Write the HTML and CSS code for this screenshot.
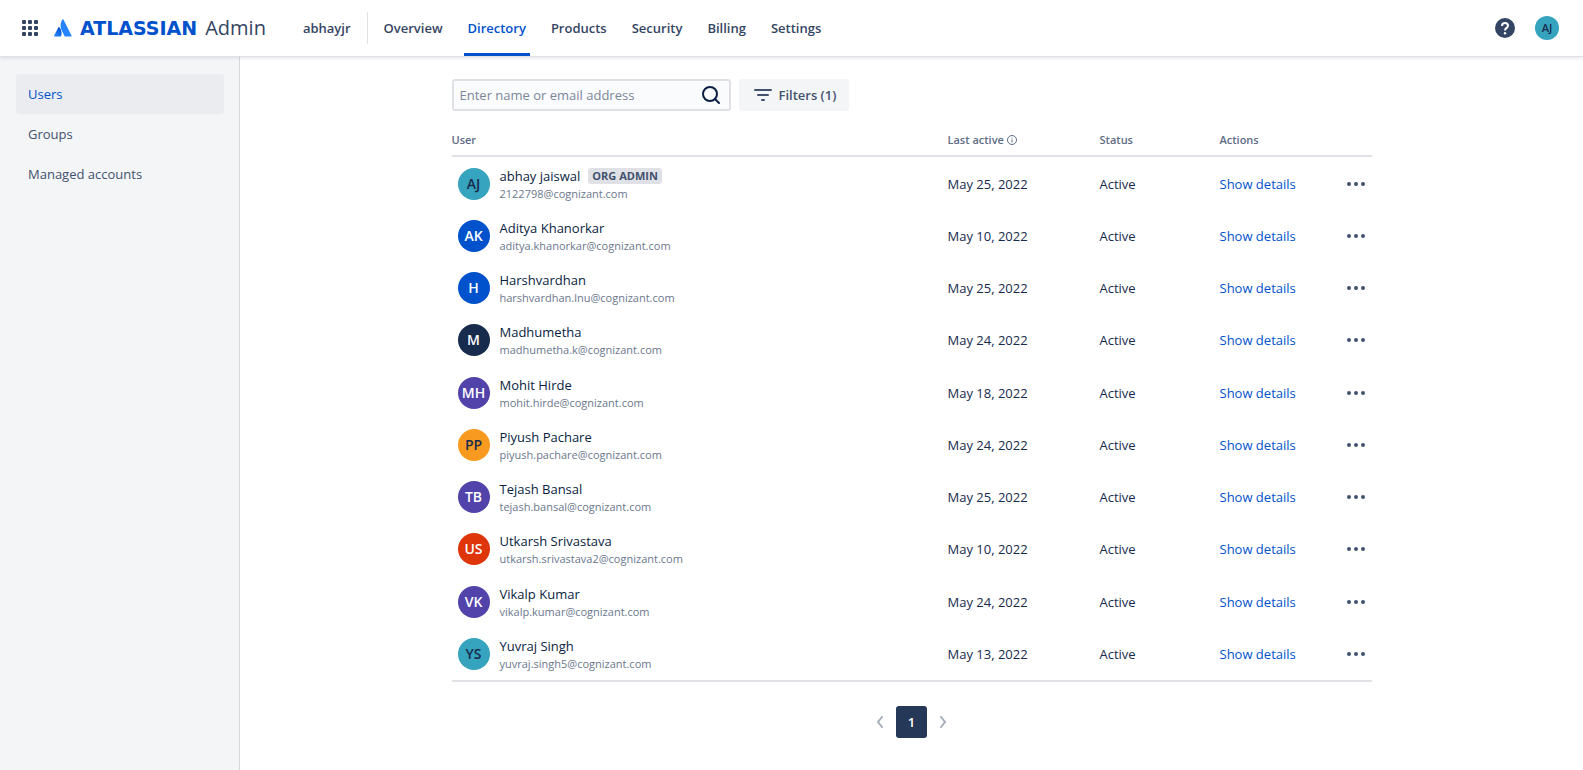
FILE: index.html
```html
<!DOCTYPE html>
<html lang="en">
<head>
<meta charset="utf-8">
<title>Users - Atlassian Admin</title>
<link rel="stylesheet" href="styles.css">
</head>
<body>
<header class="topbar">
  <button class="icon-button switcher" aria-label="Switch product">
    <svg width="16" height="16" viewBox="0 0 16 16" fill="currentColor"><rect width="4" height="4" rx="1"/><rect x="6" width="4" height="4" rx="1"/><rect x="12" width="4" height="4" rx="1"/><rect y="6" width="4" height="4" rx="1"/><rect x="6" y="6" width="4" height="4" rx="1"/><rect x="12" y="6" width="4" height="4" rx="1"/><rect y="12" width="4" height="4" rx="1"/><rect x="6" y="12" width="4" height="4" rx="1"/><rect x="12" y="12" width="4" height="4" rx="1"/></svg>
  </button>
  <a class="brand" href="#">
    <svg class="brand-mark" width="18" height="18" viewBox="0 0 18 18"><defs><linearGradient id="mark" x1="0.8" y1="0.1" x2="0.3" y2="1"><stop offset="0" stop-color="#0052cc"/><stop offset="1" stop-color="#2684ff"/></linearGradient></defs><path fill="url(#mark)" d="M5.3 8.2c-.3-.3-.7-.3-.9.1L.1 16.800c-.2.4 0 .8.5.8h5.900c.2 0 .4-.1.5-.3 1.300-2.700.5-6.700-1.700-9.100z"/><path fill="#2684ff" d="M8.400.5C6 4.200 6.200 8.300 7.800 11.500l2.800 5.700c.1.200.3.400.6.400h5.900c.5 0 .7-.5.500-.8L9.400.500c-.2-.5-.7-.5-1 0z"/></svg>
    <span class="brand-name">ATLASSIAN</span>
    <span class="brand-product">Admin</span>
  </a>
  <a class="org" href="#">abhayjr</a>
  <nav class="nav" aria-label="Primary">
    <a href="#">Overview</a>
    <a class="current" href="#" aria-current="page">Directory</a>
    <a href="#">Products</a>
    <a href="#">Security</a>
    <a href="#">Billing</a>
    <a href="#">Settings</a>
  </nav>
  <div class="tools">
    <button class="icon-button" aria-label="Help">
      <svg width="20" height="20" viewBox="0 0 20 20"><circle cx="10" cy="10" r="10" fill="#344563"/><path d="M7 7.900C7 6 8.300 5 10 5s3 1 3 2.700c0 2.200-3 2.200-3 4.700" fill="none" stroke="#fff" stroke-width="2"/><circle cx="10" cy="15.200" r="1.200" fill="#fff"/></svg>
    </button>
    <button class="avatar avatar-small teal" aria-label="Your profile">AJ</button>
  </div>
</header>
<div class="shell">
  <nav class="sidebar" aria-label="Directory">
    <a class="selected" href="#">Users</a>
    <a href="#">Groups</a>
    <a href="#">Managed accounts</a>
  </nav>
  <main class="main">
    <div class="content">
      <div class="controls">
        <label class="search">
          <input type="text" placeholder="Enter name or email address" aria-label="Search users">
          <svg width="20" height="20" viewBox="0 0 20 20" fill="none" stroke="#091e42" stroke-width="2"><circle cx="9" cy="9" r="7"/><path d="M14 14l4 4" stroke-linecap="round"/></svg>
        </label>
        <button class="filters">
          <svg width="18" height="12" viewBox="0 0 18 12" fill="none" stroke="currentColor" stroke-width="2" stroke-linecap="round"><path d="M1 1h16M4 6h10M8 11h2"/></svg>
          Filters (1)
        </button>
      </div>
      <table class="users">
        <thead>
          <tr><th>User</th><th class="col-last">Last active <svg width="10" height="10" viewBox="0 0 10 10" fill="none" stroke="currentColor"><circle cx="5" cy="5" r="4.500"/><path d="M5 4.500v3M5 2.500v1"/></svg></th><th class="col-status">Status</th><th class="col-actions">Actions</th><th class="col-more"></th></tr>
        </thead>
        <tbody>
          <tr><td><div class="user"><span class="avatar teal">AJ</span><div><div class="name">abhay jaiswal <span class="badge">ORG ADMIN</span></div><div class="email">2122798@cognizant.com</div></div></div></td><td>May 25, 2022</td><td>Active</td><td><a href="#">Show details</a></td><td><button class="more" aria-label="More actions"><svg width="18" height="4" viewBox="0 0 18 4" fill="currentColor"><circle cx="2" cy="2" r="2"/><circle cx="9" cy="2" r="2"/><circle cx="16" cy="2" r="2"/></svg></button></td></tr>
          <tr><td><div class="user"><span class="avatar blue">AK</span><div><div class="name">Aditya Khanorkar</div><div class="email">aditya.khanorkar@cognizant.com</div></div></div></td><td>May 10, 2022</td><td>Active</td><td><a href="#">Show details</a></td><td><button class="more" aria-label="More actions"><svg width="18" height="4" viewBox="0 0 18 4" fill="currentColor"><circle cx="2" cy="2" r="2"/><circle cx="9" cy="2" r="2"/><circle cx="16" cy="2" r="2"/></svg></button></td></tr>
          <tr><td><div class="user"><span class="avatar blue">H</span><div><div class="name">Harshvardhan</div><div class="email">harshvardhan.lnu@cognizant.com</div></div></div></td><td>May 25, 2022</td><td>Active</td><td><a href="#">Show details</a></td><td><button class="more" aria-label="More actions"><svg width="18" height="4" viewBox="0 0 18 4" fill="currentColor"><circle cx="2" cy="2" r="2"/><circle cx="9" cy="2" r="2"/><circle cx="16" cy="2" r="2"/></svg></button></td></tr>
          <tr><td><div class="user"><span class="avatar navy">M</span><div><div class="name">Madhumetha</div><div class="email">madhumetha.k@cognizant.com</div></div></div></td><td>May 24, 2022</td><td>Active</td><td><a href="#">Show details</a></td><td><button class="more" aria-label="More actions"><svg width="18" height="4" viewBox="0 0 18 4" fill="currentColor"><circle cx="2" cy="2" r="2"/><circle cx="9" cy="2" r="2"/><circle cx="16" cy="2" r="2"/></svg></button></td></tr>
          <tr><td><div class="user"><span class="avatar purple">MH</span><div><div class="name">Mohit Hirde</div><div class="email">mohit.hirde@cognizant.com</div></div></div></td><td>May 18, 2022</td><td>Active</td><td><a href="#">Show details</a></td><td><button class="more" aria-label="More actions"><svg width="18" height="4" viewBox="0 0 18 4" fill="currentColor"><circle cx="2" cy="2" r="2"/><circle cx="9" cy="2" r="2"/><circle cx="16" cy="2" r="2"/></svg></button></td></tr>
          <tr><td><div class="user"><span class="avatar orange">PP</span><div><div class="name">Piyush Pachare</div><div class="email">piyush.pachare@cognizant.com</div></div></div></td><td>May 24, 2022</td><td>Active</td><td><a href="#">Show details</a></td><td><button class="more" aria-label="More actions"><svg width="18" height="4" viewBox="0 0 18 4" fill="currentColor"><circle cx="2" cy="2" r="2"/><circle cx="9" cy="2" r="2"/><circle cx="16" cy="2" r="2"/></svg></button></td></tr>
          <tr><td><div class="user"><span class="avatar purple">TB</span><div><div class="name">Tejash Bansal</div><div class="email">tejash.bansal@cognizant.com</div></div></div></td><td>May 25, 2022</td><td>Active</td><td><a href="#">Show details</a></td><td><button class="more" aria-label="More actions"><svg width="18" height="4" viewBox="0 0 18 4" fill="currentColor"><circle cx="2" cy="2" r="2"/><circle cx="9" cy="2" r="2"/><circle cx="16" cy="2" r="2"/></svg></button></td></tr>
          <tr><td><div class="user"><span class="avatar red">US</span><div><div class="name">Utkarsh Srivastava</div><div class="email">utkarsh.srivastava2@cognizant.com</div></div></div></td><td>May 10, 2022</td><td>Active</td><td><a href="#">Show details</a></td><td><button class="more" aria-label="More actions"><svg width="18" height="4" viewBox="0 0 18 4" fill="currentColor"><circle cx="2" cy="2" r="2"/><circle cx="9" cy="2" r="2"/><circle cx="16" cy="2" r="2"/></svg></button></td></tr>
          <tr><td><div class="user"><span class="avatar purple">VK</span><div><div class="name">Vikalp Kumar</div><div class="email">vikalp.kumar@cognizant.com</div></div></div></td><td>May 24, 2022</td><td>Active</td><td><a href="#">Show details</a></td><td><button class="more" aria-label="More actions"><svg width="18" height="4" viewBox="0 0 18 4" fill="currentColor"><circle cx="2" cy="2" r="2"/><circle cx="9" cy="2" r="2"/><circle cx="16" cy="2" r="2"/></svg></button></td></tr>
          <tr><td><div class="user"><span class="avatar teal">YS</span><div><div class="name">Yuvraj Singh</div><div class="email">yuvraj.singh5@cognizant.com</div></div></div></td><td>May 13, 2022</td><td>Active</td><td><a href="#">Show details</a></td><td><button class="more" aria-label="More actions"><svg width="18" height="4" viewBox="0 0 18 4" fill="currentColor"><circle cx="2" cy="2" r="2"/><circle cx="9" cy="2" r="2"/><circle cx="16" cy="2" r="2"/></svg></button></td></tr>
        </tbody>
      </table>
      <nav class="pagination" aria-label="Pagination">
        <button class="page-step" aria-label="Previous"><svg width="8" height="12" viewBox="0 0 8 12" fill="none" stroke="currentColor" stroke-width="2" stroke-linecap="round"><path d="M6 1L2 6l4 5"/></svg></button>
        <button class="page" aria-current="page">1</button>
        <button class="page-step" aria-label="Next"><svg width="8" height="12" viewBox="0 0 8 12" fill="none" stroke="currentColor" stroke-width="2" stroke-linecap="round"><path d="M2 1l4 5-4 5"/></svg></button>
      </nav>
    </div>
  </main>
</div>
</body>
</html>
```
FILE: styles.css
```css
* { box-sizing: border-box; }

body {
  display: flex;
  flex-direction: column;
  min-height: 100vh;
  margin: 0;
  background: #fff;
  color: #172b4d;
  font-family: "Open Sans", "Noto Sans", sans-serif;
  font-size: 13px;
  line-height: 20px;
}

a { color: inherit; text-decoration: none; }

svg { display: block; }

button {
  padding: 0;
  border: 0;
  background: none;
  color: inherit;
  font: inherit;
  cursor: pointer;
}

.topbar {
  position: relative;
  z-index: 1;
  display: flex;
  align-items: center;
  height: 56px;
  padding: 0 24px 0 22px;
  background: #fff;
  box-shadow: 0 1px 0 #dfe1e6, 0 2px 4px rgba(9, 30, 66, 0.12);
  color: #344563;
}

.icon-button { display: flex; }

.brand {
  display: flex;
  align-items: center;
  gap: 8px;
  margin-left: 16px;
}

.brand-name {
  color: #0052cc;
  font-family: "DejaVu Sans", sans-serif;
  font-size: 19px;
  font-weight: 700;
}

.brand-product {
  font-size: 20px;
  line-height: 28px;
}

.org {
  margin-left: 37px;
  padding-right: 16px;
  border-right: 1px solid #dfe1e6;
  font-weight: 600;
  line-height: 32px;
}

.nav {
  display: flex;
  align-self: stretch;
  gap: 17px;
  margin-left: 12px;
  font-weight: 600;
}

.nav a {
  display: flex;
  align-items: center;
  padding: 0 4px;
}

.nav .current {
  box-shadow: inset 0 -3px #0052cc;
  color: #0052cc;
}

.tools {
  display: flex;
  align-items: center;
  gap: 20px;
  margin-left: auto;
}

.avatar {
  display: flex;
  flex: none;
  align-items: center;
  justify-content: center;
  width: 32px;
  height: 32px;
  border-radius: 50%;
  color: #fff;
  font-size: 14px;
  font-weight: 600;
}

.avatar-small {
  width: 24px;
  height: 24px;
  font-size: 11px;
}

.teal { background: #36a3bf; color: #172b4d; }
.blue { background: #0052cc; }
.navy { background: #172b4d; }
.purple { background: #5243aa; }
.orange { background: #f89a20; color: #172b4d; }
.red { background: #de350b; }

.shell {
  display: flex;
  flex: 1;
}

.sidebar {
  flex: none;
  width: 240px;
  padding: 18px 15px 0 16px;
  border-right: 1px solid #d5d8dd;
  background: #f4f5f7;
  color: #42526e;
}

.sidebar a {
  display: block;
  padding: 10px 12px;
  border-radius: 3px;
}

.sidebar .selected {
  background: #ebecf0;
  color: #0052cc;
}

.main {
  flex: 1;
  padding: 23px 32px;
}

.content {
  max-width: 920px;
  margin: 0 auto;
}

.controls {
  display: flex;
  gap: 8px;
}

.search {
  display: flex;
  align-items: center;
  width: 279px;
  height: 32px;
  padding: 0 8px 0 6px;
  border: 2px solid #dfe1e6;
  border-radius: 3px;
  background: #fafbfc;
}

.search input {
  flex: 1;
  min-width: 0;
  padding: 0;
  border: 0;
  outline: 0;
  background: none;
  color: #172b4d;
  font: inherit;
}

.search input::placeholder { color: #7a869a; }

.filters {
  display: flex;
  align-items: center;
  gap: 7px;
  padding: 0 13px 0 15px;
  border-radius: 3px;
  background: #f4f5f7;
  color: #42526e;
  font-weight: 600;
}

.users {
  width: 100%;
  margin-top: 19px;
  border-collapse: separate;
  border-spacing: 0;
  table-layout: fixed;
}

.users th {
  height: 27px;
  padding: 0 0 5px;
  border-bottom: 2px solid #dfe1e6;
  color: #5e6c84;
  font-size: 11px;
  font-weight: 600;
  line-height: 20px;
  text-align: left;
}

.users th svg { display: inline-block; vertical-align: -1px; }

.users td { height: 52px; padding: 0; }
.users tr:first-child td { height: 53px; }

.users tr:nth-child(4n) td {
  height: 53px;
  padding-bottom: 1px;
}

.users tr:last-child td {
  height: 54px;
  border-bottom: 2px solid #dfe1e6;
}

.users td a { color: #0052cc; }

.col-last { width: 152px; }
.col-status { width: 120px; }
.col-actions { width: 127px; }
.col-more { width: 25px; }

.user {
  display: flex;
  align-items: center;
  gap: 10px;
  padding-left: 6px;
}

.name {
  display: flex;
  align-items: center;
  gap: 8px;
  color: #091e42;
  line-height: 20px;
}

.email {
  color: #6b778c;
  font-size: 11px;
  line-height: 16px;
}

.badge {
  padding: 0 4px;
  border-radius: 3px;
  background: #dfe1e6;
  color: #42526e;
  font-size: 11px;
  font-weight: 700;
  line-height: 16px;
}

.more {
  display: flex;
  align-items: center;
  height: 24px;
  color: #42526e;
}

.pagination {
  display: flex;
  align-items: center;
  justify-content: center;
  gap: 12px;
  margin-top: 24px;
}

.page {
  width: 31px;
  height: 32px;
  border-radius: 3px;
  background: #253858;
  color: #fff;
  font-weight: 600;
}

.page-step { color: #a5adba; }
```
